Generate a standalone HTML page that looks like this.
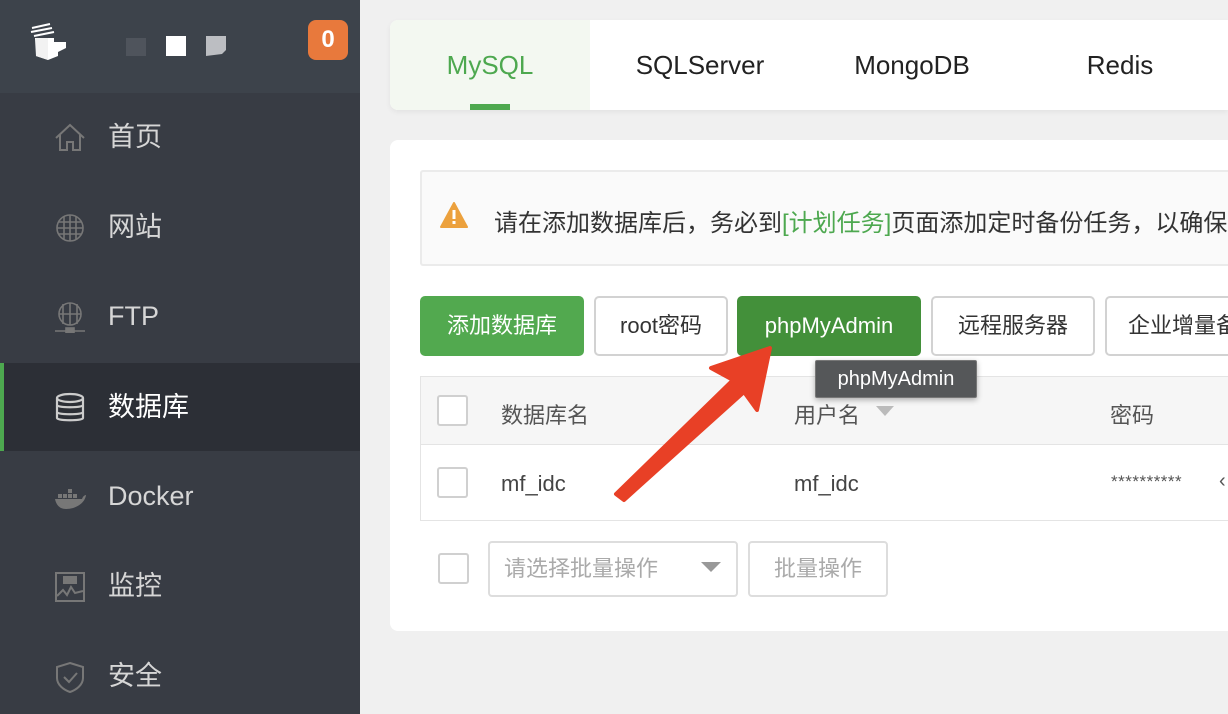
<!DOCTYPE html>
<html><head><meta charset="utf-8"><style>
*{margin:0;padding:0;box-sizing:border-box}
html,body{width:1228px;height:714px;overflow:hidden}
body{background:#f0f0f0;font-family:"Liberation Sans","Noto Sans CJK SC",sans-serif}
#w{position:relative;width:1228px;height:714px;overflow:hidden;clip-path:inset(0)}
.side{position:absolute;left:0;top:0;width:360px;height:714px;background:#383c44}
.head{height:93px;background:#3d434b;position:relative}
.item{position:absolute;left:0;width:360px;height:88px;color:#d6d6d6;font-size:27px;line-height:88px}
.item .t{position:absolute;left:108px;top:0}
.item svg{position:absolute;left:54px;top:29px}
.active{background:#2c2f36;color:#fff;border-left:4px solid #4da84f}
.abs{position:absolute}
.btn{position:absolute;top:296px;height:60px;border:2px solid #d2d2d2;border-radius:5px;background:#fff;font-size:22px;color:#333;text-align:center;line-height:56px;white-space:nowrap;overflow:hidden}
.cb{position:absolute;width:31px;height:31px;border:2px solid #d0d0d0;border-radius:3px;background:#fff}
</style></head><body><div id="w">
<div class="side">
 <div class="head">
  <svg class="abs" style="left:28px;top:20px" width="40" height="40" viewBox="0 0 40 40"><path d="M4 8 L22 4 M3 12 L24 8 M6 16 L26 12" stroke="#fff" stroke-width="2"/><path d="M7 18 H26 V22 H38 V28 L30 32 V36 L20 40 L8 36 Z" fill="#fff"/><path d="M20 18 V40 L8 36 V18Z" fill="#f2f2f2"/></svg>
  <div class="abs" style="left:126px;top:38px;width:20px;height:18px;background:#4f545c"></div>
  <div class="abs" style="left:166px;top:36px;width:20px;height:20px;background:#fff"></div>
  <div class="abs" style="left:206px;top:36px;width:20px;height:20px;background:#bcbec2;clip-path:polygon(0 0,100% 0,100% 70%,80% 90%,0 100%)"></div>
  <div class="abs" style="left:308px;top:20px;width:40px;height:40px;background:#e8793c;border-radius:8px;color:#fff;font-weight:bold;font-size:24px;text-align:center;line-height:40px">0</div>
 </div>
 <div class="item" style="top:93px"><svg width="32" height="32" viewBox="0 0 32 32" fill="none" stroke="#777" stroke-width="2"><path d="M2 16 L16 3 L30 16 M6 13 V28 H13 V20 H19 V28 H26 V13"/></svg><span class="t">首页</span></div>
 <div class="item" style="top:183px"><svg width="32" height="32" viewBox="0 0 32 32" fill="none" stroke="#777" stroke-width="1.6"><circle cx="16" cy="16" r="13"/><path d="M3 16H29M16 3V29M5 10H27M5 22H27M10 4V28M22 4V28"/></svg><span class="t">网站</span></div>
 <div class="item" style="top:272px"><svg width="32" height="32" viewBox="0 0 32 32" fill="none" stroke="#777" stroke-width="1.6"><circle cx="16" cy="13" r="11"/><path d="M5 13H27M16 2V24M9 3V23M23 3V23M1 30H31"/><rect x="12" y="27" width="8" height="5" fill="#777"/></svg><span class="t">FTP</span></div>
 <div class="item active" style="top:363px"><svg style="left:50px" width="32" height="32" viewBox="0 0 32 32" fill="none" stroke="#ccc" stroke-width="2.2"><ellipse cx="16" cy="6" rx="13" ry="4"/><path d="M3 6V26C3 29 29 29 29 26V6M3 13C3 16 29 16 29 13M3 20C3 23 29 23 29 20"/></svg><span class="t" style="left:104px">数据库</span></div>
 <div class="item" style="top:452px"><svg width="32" height="32" viewBox="0 0 32 32" fill="#777"><rect x="4" y="13" width="4" height="4"/><rect x="9" y="13" width="4" height="4"/><rect x="14" y="13" width="4" height="4"/><rect x="14" y="8" width="4" height="4"/><rect x="19" y="13" width="4" height="4"/><path d="M1 18H28C29 15 31 14 32 14C31 22 22 28 12 28C5 28 2 23 1 18Z"/></svg><span class="t">Docker</span></div>
 <div class="item" style="top:542px"><svg width="32" height="32" viewBox="0 0 32 32" fill="none" stroke="#777" stroke-width="2"><rect x="2" y="2" width="28" height="28"/><path d="M3 25L9 19L13 24L17 16L21 22L29 20"/><rect x="10" y="6" width="12" height="6" fill="#777"/></svg><span class="t">监控</span></div>
 <div class="item" style="top:632px"><svg width="32" height="32" viewBox="0 0 32 32" fill="none" stroke="#777" stroke-width="2"><path d="M16 2L29 6V17C29 24 22 29 16 31C10 29 3 24 3 17V6Z"/><path d="M10 16L15 21L23 12"/></svg><span class="t">安全</span></div>
</div>

<div class="abs" style="left:390px;top:20px;width:838px;height:90px;background:#fff;border-radius:8px 0 0 8px;box-shadow:0 2px 6px rgba(0,0,0,.06)"></div>
<div class="abs" style="left:390px;top:20px;width:200px;height:90px;background:#f3f8f1;border-radius:8px 0 0 8px"></div>
<div class="abs" style="left:470px;top:104px;width:40px;height:6px;background:#4da84f"></div>
<div class="abs" style="left:390px;top:50px;width:200px;text-align:center;font-size:26px;color:#4da84f">MySQL</div>
<div class="abs" style="left:600px;top:50px;width:200px;text-align:center;font-size:26px;color:#222">SQLServer</div>
<div class="abs" style="left:812px;top:50px;width:200px;text-align:center;font-size:26px;color:#222">MongoDB</div>
<div class="abs" style="left:1020px;top:50px;width:200px;text-align:center;font-size:26px;color:#222">Redis</div>

<div class="abs" style="left:390px;top:140px;width:838px;height:491px;background:#fff;border-radius:8px 0 0 8px"></div>
<div class="abs" style="left:420px;top:170px;width:808px;height:96px;background:#fafafa;border:2px solid #ebebeb;border-right:none;border-radius:3px 0 0 3px"></div>
<svg class="abs" style="left:440px;top:202px" width="28" height="26" viewBox="0 0 28 26"><path d="M14 1L27 25H1Z" fill="#eca13d" stroke="#eca13d" stroke-linejoin="round" stroke-width="2"/><rect x="12.5" y="8" width="3" height="9" fill="#fff"/><rect x="12.5" y="19" width="3" height="3" fill="#fff"/></svg>
<div class="abs" style="left:494px;top:203px;width:734px;overflow:hidden;font-size:24px;color:#333;white-space:nowrap">请在添加数据库后，务必到<span style="color:#4da84f">[计划任务]</span>页面添加定时备份任务，以确保数据安全</div>

<div class="btn" style="left:420px;width:164px;background:#52a94f;border-color:#52a94f;color:#fff">添加数据库</div>
<div class="btn" style="left:594px;width:134px">root密码</div>
<div class="btn" style="left:737px;width:184px;background:#43903a;border-color:#43903a;color:#fff">phpMyAdmin</div>
<div class="btn" style="left:931px;width:164px">远程服务器</div>
<div class="btn" style="left:1105px;width:123px;text-align:left;padding-left:21px;border-right:none;border-radius:5px 0 0 5px">企业增量备份</div>

<div class="abs" style="left:420px;top:376px;width:808px;height:145px;border:1px solid #e4e4e4;border-right:none"></div>
<div class="abs" style="left:421px;top:377px;width:807px;height:68px;background:#f6f6f6;border-bottom:1px solid #e4e4e4"></div>
<div class="cb" style="left:437px;top:395px"></div>
<div class="abs" style="left:501px;top:398px;font-size:22px;color:#555">数据库名</div>
<div class="abs" style="left:794px;top:398px;font-size:22px;color:#555">用户名</div>
<div class="abs" style="left:876px;top:406px;border:9px solid transparent;border-top:10px solid #bbb;border-bottom:0"></div>
<div class="abs" style="left:1110px;top:398px;font-size:22px;color:#555">密码</div>
<div class="cb" style="left:437px;top:467px"></div>
<div class="abs" style="left:501px;top:471px;font-size:22px;color:#444">mf_idc</div>
<div class="abs" style="left:794px;top:471px;font-size:22px;color:#444">mf_idc</div>
<div class="abs" style="left:1111px;top:472px;font-size:17px;color:#555;letter-spacing:0.5px">**********</div>
<div class="abs" style="left:1219px;top:470px;width:9px;overflow:hidden;font-size:20px;color:#555">‹</div>

<div class="cb" style="left:438px;top:553px"></div>
<div class="abs" style="left:488px;top:541px;width:250px;height:56px;border:2px solid #ddd;border-radius:4px;font-size:22px;color:#aaa;line-height:52px;padding-left:14px">请选择批量操作</div>
<div class="abs" style="left:701px;top:562px;border:10px solid transparent;border-top:10px solid #999;border-bottom:0"></div>
<div class="abs" style="left:748px;top:541px;width:140px;height:56px;border:2px solid #ddd;border-radius:4px;font-size:22px;color:#aaa;line-height:52px;text-align:center">批量操作</div>

<div class="abs" style="left:815px;top:360px;width:162px;height:38px;background:#555759;border:1px solid #777;border-radius:2px;color:#fff;font-size:20px;line-height:36px;text-align:center;box-shadow:0 2px 6px rgba(0,0,0,.3)">phpMyAdmin</div>

<svg class="abs" style="left:0;top:0" width="1228" height="714"><path d="M616 494 L733 380 L711 368 L770 348 L757 410 L744 392 L624 500 Z" fill="#e84026" stroke="#e84026" stroke-width="4" stroke-linejoin="round"/></svg>
</div></body></html>
